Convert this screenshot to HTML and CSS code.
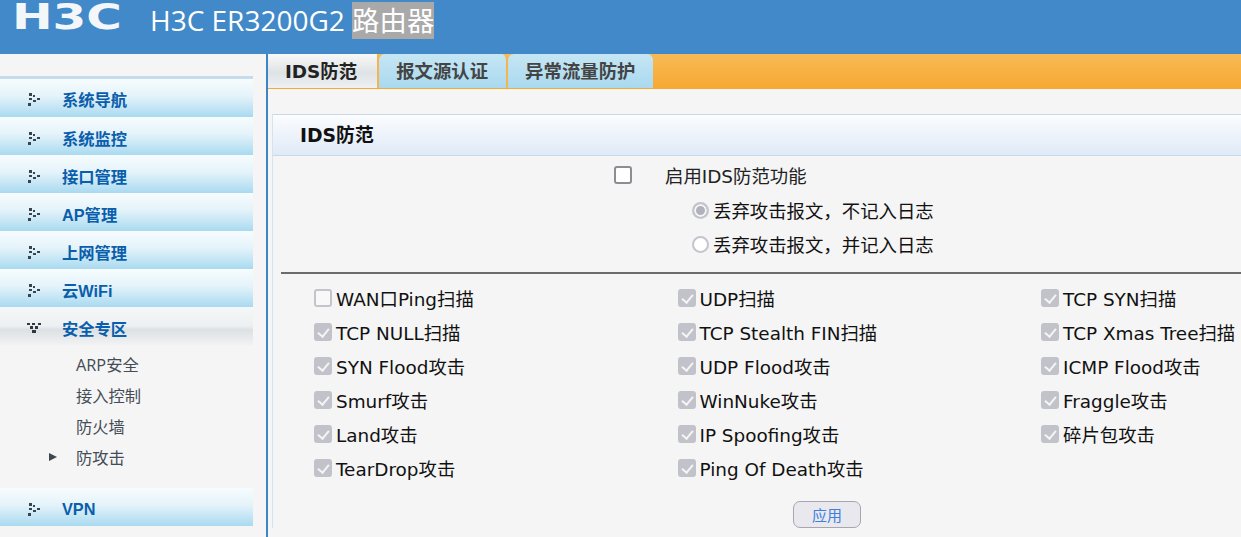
FILE: index.html
```html
<!DOCTYPE html>
<html>
  <head>
    <title>H3C ER3200G2 路由器</title>
    <link rel="stylesheet" href="styles.css">
  </head>
  <body>
    <header class="top-bar">
      <svg class="logo" viewBox="0 0 110 30" width="110" height="30">
        <text x="0" y="29" textLength="110" lengthAdjust="spacingAndGlyphs">H3C</text>
      </svg>
      <h1 class="product">H3C ER3200G2 <span class="selected">路由器</span></h1>
    </header>

    <div class="page">
      <nav class="side-nav">
        <a class="nav-item"><svg class="dots" viewBox="0 0 12 13"><use href="#dots-closed"/></svg>系统导航</a>
        <a class="nav-item"><svg class="dots" viewBox="0 0 12 13"><use href="#dots-closed"/></svg>系统监控</a>
        <a class="nav-item"><svg class="dots" viewBox="0 0 12 13"><use href="#dots-closed"/></svg>接口管理</a>
        <a class="nav-item"><svg class="dots" viewBox="0 0 12 13"><use href="#dots-closed"/></svg>AP管理</a>
        <a class="nav-item"><svg class="dots" viewBox="0 0 12 13"><use href="#dots-closed"/></svg>上网管理</a>
        <a class="nav-item"><svg class="dots" viewBox="0 0 12 13"><use href="#dots-closed"/></svg>云WiFi</a>
        <a class="nav-item open"><svg class="dots" viewBox="0 0 14 10"><use href="#dots-open"/></svg>安全专区</a>
        <ul class="sub-nav">
          <li>ARP安全</li>
          <li>接入控制</li>
          <li>防火墙</li>
          <li class="current">防攻击</li>
        </ul>
        <a class="nav-item"><svg class="dots" viewBox="0 0 12 13"><use href="#dots-closed"/></svg>VPN</a>
      </nav>

      <main class="content">
        <div class="tabs">
          <a class="tab active">IDS防范</a>
          <a class="tab">报文源认证</a>
          <a class="tab">异常流量防护</a>
        </div>

        <section class="panel">
          <h2 class="panel-title">IDS防范</h2>

          <div class="enable-row">
            <span class="check big"></span>
            <span>启用IDS防范功能</span>
          </div>
          <div class="radio-row"><span class="radio on"></span>丢弃攻击报文，不记入日志</div>
          <div class="radio-row"><span class="radio"></span>丢弃攻击报文，并记入日志</div>

          <hr class="divider">

          <div class="scan-grid">
            <label class="scan"><span class="check"></span>WAN口Ping扫描</label>
            <label class="scan"><span class="check on"></span>UDP扫描</label>
            <label class="scan"><span class="check on"></span>TCP SYN扫描</label>
            <label class="scan"><span class="check on"></span>TCP NULL扫描</label>
            <label class="scan"><span class="check on"></span>TCP Stealth FIN扫描</label>
            <label class="scan"><span class="check on"></span>TCP Xmas Tree扫描</label>
            <label class="scan"><span class="check on"></span>SYN Flood攻击</label>
            <label class="scan"><span class="check on"></span>UDP Flood攻击</label>
            <label class="scan"><span class="check on"></span>ICMP Flood攻击</label>
            <label class="scan"><span class="check on"></span>Smurf攻击</label>
            <label class="scan"><span class="check on"></span>WinNuke攻击</label>
            <label class="scan"><span class="check on"></span>Fraggle攻击</label>
            <label class="scan"><span class="check on"></span>Land攻击</label>
            <label class="scan"><span class="check on"></span>IP Spoofing攻击</label>
            <label class="scan"><span class="check on"></span>碎片包攻击</label>
            <label class="scan"><span class="check on"></span>TearDrop攻击</label>
            <label class="scan"><span class="check on"></span>Ping Of Death攻击</label>
          </div>

          <div class="actions"><button class="apply">应用</button></div>
        </section>
      </main>
    </div>

    <svg class="defs" width="0" height="0">
      <defs>
        <g id="dots-closed" fill="#39444f">
          <rect x="1" y="0" width="3" height="3"/>
          <rect x="5" y="2" width="2" height="2"/>
          <rect x="1" y="5" width="3" height="2"/>
          <rect x="9" y="5" width="3" height="2"/>
          <rect x="5" y="7" width="3" height="2"/>
          <rect x="0" y="10" width="3" height="3"/>
        </g>
        <g id="dots-open" fill="#2f3942">
          <rect x="0" y="0" width="3" height="2"/>
          <rect x="5" y="0" width="3" height="2"/>
          <rect x="11" y="0" width="3" height="2"/>
          <rect x="3" y="3" width="3" height="3"/>
          <rect x="8" y="3" width="3" height="3"/>
          <rect x="5" y="7" width="4" height="3"/>
        </g>
      </defs>
    </svg>
  </body>
</html>
```

FILE: styles.css
```css
* {
  box-sizing: border-box;
}

html,
body {
  height: 100%;
}

body {
  margin: 0;
  overflow: hidden;
  background: #f5f5f5;
  color: #111;
  font-family: "DejaVu Sans", "Noto Sans CJK SC", sans-serif;
  font-size: 18.4px;
}

.defs {
  display: block;
  height: 0;
}

/* 顶部 */
.top-bar {
  display: flex;
  height: 54px;
  padding-left: 12px;
  background: #4189c9;
  color: #fff;
}

.logo {
  flex: none;
  overflow: visible;
}

.logo text {
  fill: #f4f7fa;
  font-family: "DejaVu Sans", sans-serif;
  font-size: 36px;
  font-weight: 700;
}

.product {
  margin: 2px 0 0 28px;
  font-family: "Open Sans", "Noto Sans CJK SC", sans-serif;
  font-size: 28px;
  font-weight: 400;
  line-height: 36px;
}

.selected {
  background: #a9a9a9;
  font-size: 27.4px;
}

.page {
  display: flex;
}

/* 左侧菜单 */
.side-nav {
  width: 268px;
  height: 483px;
  flex: none;
  padding: 22px 13px 0 0;
  border-right: 2px solid #3d86c6;
}

.nav-item {
  display: flex;
  align-items: center;
  height: 38px;
  padding: 4px 0 0 28px;
  background: linear-gradient(#f7fcfe 0%, #e4f3fa 45%, #a9daf0 100%);
  color: #0a5eab;
  font-weight: 700;
  font-size: 16.3px;
  font-family: "Liberation Sans", "Noto Sans CJK SC", sans-serif;
}

.side-nav .nav-item:first-child {
  height: 41px;
  padding-top: 2px;
  border-top: 3px solid #c4dcec;
}

.nav-item .dots {
  width: 12px;
  height: 13px;
  margin-right: 22px;
  flex: none;
}

.nav-item.open {
  background: linear-gradient(#f5f7f8 0%, #edf0f2 50%, #dde1e4 60%, #f1f2f3 100%);
}

.nav-item.open .dots {
  width: 14px;
  height: 10px;
  margin-left: -1px;
  margin-right: 21px;
}

.sub-nav {
  height: 123px;
  margin: 0 0 20px;
  padding: 5px 0 0 76px;
  list-style: none;
  color: #444c55;
  font-family: "Open Sans", "Noto Sans CJK SC", sans-serif;
  font-size: 16.3px;
}

.sub-nav li {
  position: relative;
  height: 31px;
  line-height: 31px;
}

/* 当前页的小箭头 */
.sub-nav .current::before {
  content: "";
  position: absolute;
  left: -27px;
  top: 10px;
  border-left: 8px solid #3c4650;
  border-top: 4px solid transparent;
  border-bottom: 4px solid transparent;
}

/* 右侧内容 */
.content {
  flex: 1;
  min-width: 0;
}

.tabs {
  display: flex;
  height: 35px;
  padding-bottom: 1px;
  background: linear-gradient(#f8ba55, #f7a832);
}

.tab {
  height: 34px;
  padding: 0 18px 0 17px;
  border-right: 2px solid #f5b44d;
  border-radius: 6px 6px 0 0;
  background: linear-gradient(#c6e6f4, #a9d9ef);
  color: #444;
  font-weight: 700;
  line-height: 36px;
}

.tab:last-child {
  padding-right: 18px;
  border-right: 0;
}

.tab.active {
  padding: 0 20px 0 17px;
  border-radius: 0;
  background: linear-gradient(#f8f8f8 0%, #dfe3e6 55%, #eef0f1 100%);
  color: #222;
}

.panel {
  margin: 25px 0 0 4px;
  border-left: 1px solid #d8e2ea;
}

.panel-title {
  height: 42px;
  margin: 0;
  padding-left: 27px;
  border-top: 1px solid #c9d9e8;
  border-bottom: 1px solid #c9d9e8;
  background: linear-gradient(#fbfcfe, #dfeaf7);
  color: #111;
  font-size: 18.8px;
  line-height: 42px;
}

.enable-row {
  display: flex;
  align-items: center;
  gap: 33px;
  height: 37px;
  padding-left: 341px;
  color: #222;
}

.radio-row {
  display: flex;
  align-items: center;
  gap: 4px;
  height: 34px;
  padding-left: 419px;
  color: #111;
}

.radio {
  width: 17px;
  height: 17px;
  flex: none;
  border: 2px solid #c4c4cc;
  border-radius: 50%;
  background: #fff;
}

.radio.on {
  background: #b1b1bb;
  box-shadow: inset 0 0 0 2px #f5f5f5;
}

.divider {
  height: 2px;
  margin: 11px 0 7px 8px;
  border: 0;
  background: #6b6b6b;
}

.scan-grid {
  display: grid;
  grid-template-columns: 363.5px 363.5px 1fr;
  padding-left: 41px;
}

.scan {
  display: flex;
  align-items: center;
  gap: 4px;
  height: 34px;
  white-space: nowrap;
}

.check {
  position: relative;
  width: 18px;
  height: 18px;
  flex: none;
  border: 2px solid #c4c4cc;
  border-radius: 3px;
  background: #f8f8f8;
}

.check.big {
  border-color: #8c8c94;
  background: #fff;
}

.check.on {
  border-color: #c2c2ca;
  background: #c2c2ca;
}

/* 灰色勾 */
.check.on::after {
  content: "";
  position: absolute;
  left: 4px;
  top: 1px;
  width: 5px;
  height: 9px;
  border: solid #f5f5f5;
  border-width: 0 2px 2px 0;
  transform: rotate(40deg);
}

.actions {
  margin-top: 16px;
  padding-left: 520px;
}

.apply {
  width: 68px;
  height: 27px;
  padding: 0;
  border: 1px solid #a6a6ae;
  border-radius: 7px;
  background: #e8e8ee;
  color: #3f7fdc;
  font-family: "Noto Sans CJK SC", sans-serif;
  font-size: 15px;
}
```
